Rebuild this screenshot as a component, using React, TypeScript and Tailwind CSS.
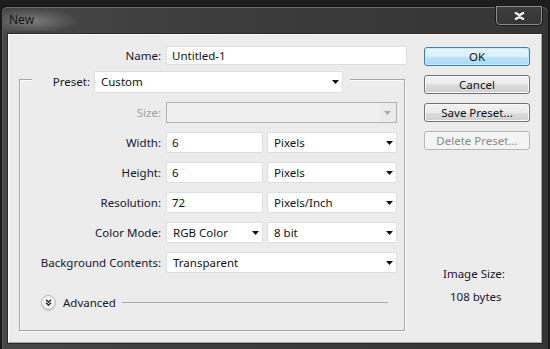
import React from "react";

const font = { fontFamily: '"Noto Sans", "Open Sans", sans-serif' };

function Arrow({ gray }: { gray?: boolean }) {
  return (
    <svg width="7" height="4" viewBox="0 0 7 4" className="shrink-0">
      <path d="M0 0H7L3.5 4Z" fill={gray ? "#a8a8a8" : "#111"} />
    </svg>
  );
}

function TextInput({ value, w }: { value: string; w: string }) {
  return (
    <div
      className={`${w} h-full bg-white border border-[#dedede] rounded-[2px] flex items-center pl-[5px] text-[11.5px] text-[#111]`}
    >
      {value}
    </div>
  );
}

function Select({ value, w }: { value: string; w: string }) {
  return (
    <div
      className={`${w} h-full bg-white border border-[#dedede] rounded-[2px] flex items-center justify-between pl-[6px] pr-[3px] text-[11.5px] text-[#111]`}
    >
      <span>{value}</span>
      <Arrow />
    </div>
  );
}

function Row({ label, children, disabled }: { label: string; children: React.ReactNode; disabled?: boolean }) {
  return (
    <div className="flex h-[21px] items-stretch">
      <div
        className={`w-[141px] flex items-center justify-end text-[11.5px] ${disabled ? "text-[#a2a2a2]" : "text-[#161630]"}`}
      >
        {label}
      </div>
      <div className="ml-[5px] flex gap-[4px] items-stretch">{children}</div>
    </div>
  );
}

function Btn({ label, kind }: { label: string; kind?: "default" | "disabled" }) {
  const cls =
    kind === "default"
      ? "border-[#3c7fb1] bg-[linear-gradient(#eaf6fd,#d9f0fc_50%,#bee6fd_50%,#a7d9f5)] text-[#111] shadow-[inset_0_0_0_1px_#c8ecfc]"
      : kind === "disabled"
      ? "border-[#b5b8ba] bg-[#f4f4f4] text-[#8a8a8a]"
      : "border-[#707070] bg-[linear-gradient(#f2f2f2,#ebebeb_50%,#dddddd_50%,#cfcfcf)] text-[#111] shadow-[inset_0_0_0_1px_#fbfbfb]";
  return (
    <div
      className={`h-[19px] w-[106px] rounded-[3px] border flex items-center justify-center text-[11.5px] leading-none ${cls}`}
    >
      {label}
    </div>
  );
}

export default function App() {
  return (
    <div className="w-[550px] h-[349px] overflow-hidden bg-[#1d1d1d] pt-[6px] px-[1px]" style={font}>
      <div className="h-[350px] rounded-t-[6px] border border-[#161616] bg-[linear-gradient(90deg,#474747,#3c3c3c_40%,#353535)] shadow-[inset_0_1px_0_#6a6a6a,inset_1px_0_0_#5a5a5a] flex flex-col">
        {/* Title bar */}
        <div className="h-[26px] flex justify-between items-start shrink-0">
          <div className="ml-[1px] mt-[2px] h-[22px] w-[110px] flex items-center pl-[6px] bg-[radial-gradient(ellipse_48px_13px_at_28px_12px,#7e7e7e,#5c5c5c_55%,rgba(72,72,72,0))]">
            <span className="text-[12px] text-[#141414]">New</span>
          </div>
          <div className="mr-[5px] -mt-[1px] h-[20px] w-[48px] rounded-b-[5px] border border-[#1a1a1a] border-t-0 shadow-[inset_0_0_0_1px_#8a8a8a] bg-[linear-gradient(#3e3e3e,#353535)] flex items-center justify-center">
            <svg width="11" height="8" viewBox="0 0 11 8">
              <path d="M1 0.5L5.5 3.2L10 0.5M1 7.5L5.5 4.8L10 7.5" stroke="#fff" strokeWidth="2.2" fill="none" />
            </svg>
          </div>
        </div>
        {/* Client */}
        <div className="mx-[5px] h-[311px] border border-[#2a2a2a] shrink-0">
          <div className="h-full bg-[#ececec] border-t border-l border-[#fafafa] border-r border-b border-r-[#a8a8a8] border-b-[#a8a8a8] flex pl-[10px] pt-[11px] text-[#161630]">
            {/* Left column */}
            <div className="w-[388px] flex flex-col">
              <div className="flex h-[19px] items-stretch">
                <div className="w-[142px] flex items-center justify-end text-[11.5px]">Name:</div>
                <div className="ml-[5px] flex">
                  <TextInput value="Untitled-1" w="w-[241px]" />
                </div>
              </div>
              <div className="mt-[14px] w-[386px] h-[252px] border border-[#a9a9a9] shadow-[inset_1px_1px_0_#fbfbfb,1px_1px_0_#fbfbfb] flex flex-col">
                <div className="-mt-[9px] ml-[12px] self-start h-[22px] flex items-stretch bg-[#ececec] pr-[7px]">
                  <div className="w-[62px] flex items-center justify-end pr-[4px] text-[11.5px]">Preset:</div>
                  <Select value="Custom" w="w-[249px]" />
                </div>
                <div className="mt-[9px] flex flex-col gap-[9px]">
                  <Row label="Size:" disabled>
                    <div className="w-[231px] h-full border border-[#b3b3b3] bg-[#ebebeb] flex items-stretch">
                      <div className="flex-1 bg-[#efefef]" />
                      <div className="w-[17px] flex items-center justify-center">
                        <Arrow gray />
                      </div>
                    </div>
                  </Row>
                  <Row label="Width:">
                    <TextInput value="6" w="w-[97px]" />
                    <Select value="Pixels" w="w-[130px]" />
                  </Row>
                  <Row label="Height:">
                    <TextInput value="6" w="w-[97px]" />
                    <Select value="Pixels" w="w-[130px]" />
                  </Row>
                  <Row label="Resolution:">
                    <TextInput value="72" w="w-[97px]" />
                    <Select value="Pixels/Inch" w="w-[130px]" />
                  </Row>
                  <Row label="Color Mode:">
                    <Select value="RGB Color" w="w-[97px]" />
                    <Select value="8 bit" w="w-[130px]" />
                  </Row>
                  <Row label="Background Contents:">
                    <Select value="Transparent" w="w-[231px]" />
                  </Row>
                </div>
                <div className="mt-[22px] h-[15px] flex items-center">
                  <div className="ml-[21px] w-[15px] h-[15px] rounded-full border border-[#b9b9b9] bg-[radial-gradient(circle_at_40%_30%,#ffffff,#e4e4e4)] shadow-[0_1px_1px_rgba(0,0,0,0.15)] flex items-center justify-center">
                    <svg width="7" height="7" viewBox="0 0 7 7">
                      <path d="M1 0.8L3.5 3L6 0.8M1 3.8L3.5 6L6 3.8" stroke="#222" strokeWidth="1.4" fill="none" />
                    </svg>
                  </div>
                  <span className="ml-[7px] text-[11.5px]">Advanced</span>
                  <div className="ml-[6px] mr-[16px] flex-1 h-0 border-t border-[#acacac]" />
                </div>
              </div>
            </div>
            {/* Right column */}
            <div className="ml-[17px] w-[106px] pt-[1px] flex flex-col">
              <div className="flex flex-col gap-[9px]">
                <Btn label="OK" kind="default" />
                <Btn label="Cancel" />
                <Btn label="Save Preset..." />
                <Btn label="Delete Preset..." kind="disabled" />
              </div>
              <div className="mt-[116px] ml-[19px] text-[11.5px] leading-[16px]">Image Size:</div>
              <div className="mt-[7px] ml-[26px] text-[11.5px] leading-[16px]">108 bytes</div>
            </div>
          </div>
        </div>
      </div>
    </div>
  );
}
